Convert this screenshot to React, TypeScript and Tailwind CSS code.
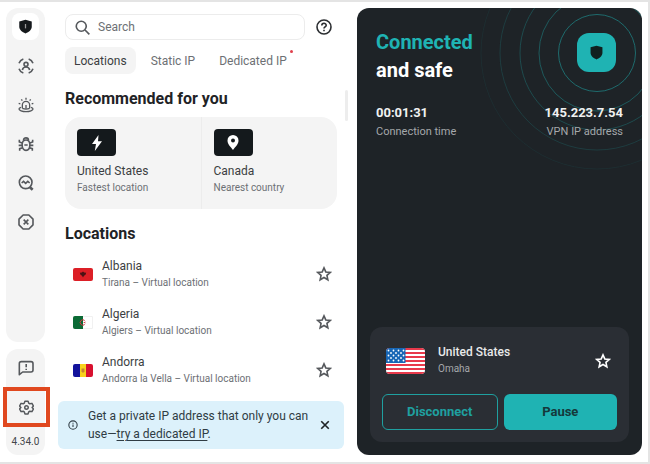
import type { ReactNode, SVGProps } from 'react';

type IconProps = SVGProps<SVGSVGElement>;

function Icon({ children, ...props }: IconProps) {
  return (
    <svg viewBox="0 0 24 24" fill="none" stroke="currentColor" strokeWidth={2.4} aria-hidden="true" {...props}>
      {children}
    </svg>
  );
}

const ShieldIcon = (props: IconProps) => (
  <Icon stroke="none" {...props}>
    <path d="M12 1 21.5 3.500v9c0 4.800-4 8.600-9.500 10.500-5.500-1.900-9.500-5.700-9.500-10.500v-9L12 1Z" fill="currentColor" />
  </Icon>
);

const StarIcon = (props: IconProps) => (
  <Icon {...props}>
    <path d="m12 2.800 2.700 6.100 6.700.7-5 4.500 1.400 6.600-5.800-3.400-5.800 3.400 1.400-6.600-5-4.500 6.700-.7L12 2.800Z" />
  </Icon>
);

const ScanIcon = (props: IconProps) => (
  <Icon {...props}>
    <path d="M8 1.500C4.800 2.600 2.600 4.800 1.500 8M16 1.500c3.200 1.100 5.400 3.300 6.500 6.500M8 22.500c-3.200-1.100-5.400-3.300-6.500-6.500M16 22.500c3.200-1.100 5.400-3.300 6.500-6.500" />
    <circle cx="12" cy="9.500" r="3" />
    <path d="M6.500 18c.6-3 2.700-4.500 5.500-4.500s4.900 1.500 5.500 4.500" />
  </Icon>
);

const AlarmIcon = (props: IconProps) => (
  <Icon strokeWidth={2} {...props}>
    <path d="M6.500 17v-5a5.500 5.500 0 0 1 11 0v5M12 1v3M5 3.500l1.500 2M19 3.500l-1.500 2M1 9.500l2.500.8M23 9.500l-2.500.8M12 12v5" />
    <path d="M4.500 15.500C2.500 16.300 1.500 17 1.500 18c0 2 4.700 4 10.500 4s10.500-2 10.500-4c0-1-1-1.700-3-2.500M6.500 17c3.400 1.300 7.600 1.300 11 0" />
  </Icon>
);

const BugIcon = (props: IconProps) => (
  <Icon {...props}>
    <path d="M12 6c4 0 5.800 2.600 5.800 7.200 0 5-2.300 8.300-5.800 8.300s-5.800-3.300-5.800-8.300C6.200 8.600 8 6 12 6Z" />
    <path d="M8.300 6.500c0-5 7.400-5 7.400 0M6.500 10.500 2 9V5.500M17.500 10.500 22 9V5.500M6 14H1M18 14h5M7 17.500 2.500 19v3M17 17.500l4.500 1.500v3M9.500 13.500h5" />
  </Icon>
);

const MonitorSearchIcon = (props: IconProps) => (
  <Icon {...props}>
    <circle cx="11.500" cy="11" r="9.500" />
    <path d="m5.500 12 2.800-2.500 3.200 3 3.200-3 2.800 2.500" />
    <path d="m17.500 18 4.500 4" strokeWidth="4" />
  </Icon>
);

const BlockIcon = (props: IconProps) => (
  <Icon {...props}>
    <path d="M7.700 1.500h8.600l6.200 6.200v8.600l-6.200 6.200H7.700l-6.200-6.200V7.700l6.200-6.200Z" strokeLinejoin="round" />
    <path d="m8.500 8.500 7 7M15.500 8.500l-7 7" />
  </Icon>
);

const FeedbackIcon = (props: IconProps) => (
  <Icon {...props}>
    <path d="M2 22V5.500C2 3.500 3 2.500 5 2.500h14.500c2 0 3 1 3 3v9.500c0 2-1 3-3 3H7L2 22Z" strokeLinejoin="round" />
    <path d="M12.300 6v5M12.300 13v2" />
  </Icon>
);

const GearIcon = (props: IconProps) => (
  <Icon strokeLinejoin="round" {...props}>
    <path d="M9.500 1.800h5l1.100 3.300 1.700 1 3.400-.7 2.500 4.300L21 12l2.200 2.300-2.500 4.300-3.400-.7-1.700 1-1.100 3.300h-5l-1.100-3.300-1.700-1-3.400.7-2.500-4.300L3 12 .8 9.700l2.500-4.300 3.400.7 1.700-1 1.100-3.300Z" />
    <circle cx="12" cy="12" r="2.800" />
  </Icon>
);

const tools = [
  { label: 'Alternative ID', icon: ScanIcon },
  { label: 'Alert', icon: AlarmIcon },
  { label: 'Antivirus', icon: BugIcon },
  { label: 'Private search', icon: MonitorSearchIcon },
  { label: 'Ad blocker', icon: BlockIcon },
];

function Sidebar() {
  return (
    <nav aria-label="Main" className="flex flex-col gap-[7px] text-[#55585c]">
      <div className="flex flex-1 flex-col items-center rounded-xl bg-[#f4f4f4] pt-[5px]">
        <button aria-label="VPN" className="mb-[6px] flex size-[27px] items-center justify-center rounded-lg bg-white text-[#15191c]">
          <svg viewBox="0 0 24 24" className="size-[15px]" aria-hidden="true">
            <path d="M12 1 22 4v8.500c0 4.800-4.300 8.600-10 10.500C6.300 21.100 2 17.300 2 12.500V4l10-3Z" fill="currentColor" />
            <path d="M12 8v7" stroke="#999" strokeWidth="2" />
          </svg>
        </button>
        {tools.map(({ label, icon: ToolIcon }) => (
          <button key={label} aria-label={label} className="flex h-[39px] w-full items-center justify-center">
            <ToolIcon className="size-4" />
          </button>
        ))}
      </div>
      <div className="flex flex-col items-center rounded-xl bg-[#f4f4f4]">
        <button aria-label="Feedback" className="flex h-[38px] w-full items-center justify-center">
          <FeedbackIcon className="size-4" />
        </button>
        <button
          aria-label="Settings"
          className="-mr-[5px] -ml-[3px] flex h-10 w-[47px] items-center justify-center border-4 border-[#e0481f]"
        >
          <GearIcon className="size-[15px]" />
        </button>
        <span className="flex h-7 items-center text-[10px] text-[#44474a]">4.34.0</span>
      </div>
    </nav>
  );
}

const AlbaniaFlag = () => (
  <svg viewBox="0 0 20 13" className="h-[13px] w-5 rounded-xs" aria-hidden="true">
    <path d="M0 0h20v13H0z" fill="#dc1f26" />
    <path d="m6.800 4.800 2-.3 1.200-1 1.200 1 2 .3-.7 2-1.500 1-1 1.700-1-1.700-1.500-1-.7-2Z" fill="#4a1214" />
  </svg>
);

const AlgeriaFlag = () => (
  <svg viewBox="0 0 20 13" className="h-[13px] w-5 rounded-xs" aria-hidden="true">
    <path d="M0 0h20v13H0z" fill="#e2e2e2" />
    <path d="M10 .5h9.500v12H10z" fill="#fff" />
    <path d="M0 0h10v13H0z" fill="#0b6a35" />
    <path d="M11.700 4.500a2.700 2.700 0 1 0 0 4" fill="none" stroke="#d2343f" />
    <path d="m10 6.500 3-1-1 1 1 1-3-1Z" fill="#d2343f" />
  </svg>
);

const AndorraFlag = () => (
  <svg viewBox="0 0 20 13" className="h-[13px] w-5 rounded-xs" aria-hidden="true">
    <path d="M0 0h7v13H0z" fill="#13139c" />
    <path d="M7 0h6v13H7z" fill="#f8d21c" />
    <path d="M13 0h7v13h-7z" fill="#d8102f" />
    <path d="M8.500 4.500h3v3L10 9 8.500 7.500z" fill="#c7862c" />
  </svg>
);

function UsaFlag() {
  return (
    <svg viewBox="0 0 39 26" className="h-[26px] w-[39px] rounded-sm" aria-hidden="true">
      <path d="M0 0h39v26H0z" fill="#fff" />
      <path d="M0 1h39M0 5h39M0 9h39M0 13h39M0 17h39M0 21h39M0 25h39" stroke="#e8394b" strokeWidth="2" />
      <path d="M0 0h19.500v15H0z" fill="#1766b5" />
      <g stroke="#fff" strokeWidth="1.800" strokeLinecap="round" strokeDasharray="0 5">
        <path d="M2.500 2.500H18M5 5H18M2.500 7.500H18M5 10H18M2.500 12.500H18" />
      </g>
    </svg>
  );
}

const tabs = ['Locations', 'Static IP', 'Dedicated IP'];

const locations = [
  { name: 'Albania', detail: 'Tirana – Virtual location', flag: AlbaniaFlag },
  { name: 'Algeria', detail: 'Algiers – Virtual location', flag: AlgeriaFlag },
  { name: 'Andorra', detail: 'Andorra la Vella – Virtual location', flag: AndorraFlag },
];

function RecommendedCard({ name, detail, children }: { name: string; detail: string; children: ReactNode }) {
  return (
    <button className="flex flex-1 flex-col items-start pt-3 pl-3 text-left">
      <span className="mb-[7px] flex h-[27px] w-[39px] items-center justify-center rounded-sm bg-[#14191c] text-white">
        {children}
      </span>
      <span className="text-[12px] leading-4 text-[#3b3e42]">{name}</span>
      <span className="mt-px text-[10px] leading-4 text-[#6d7074]">{detail}</span>
    </button>
  );
}

function LocationsPane() {
  return (
    <main className="relative flex flex-col pr-[13px] pl-5">
      <div className="mt-[6px] mr-[7px] flex items-center">
        <label className="flex h-[26px] flex-1 items-center gap-2 rounded-lg border border-[#ececec] pl-[9px] text-[#55585c]">
          <Icon className="size-[15px]" strokeWidth={2.6}>
            <circle cx="10" cy="10" r="8" />
            <path d="m16 16 7 7" />
          </Icon>
          <input
            type="text"
            aria-label="Search"
            placeholder="Search"
            className="w-0 flex-1 bg-transparent text-[12px] outline-none placeholder:text-[#6d7074]"
          />
        </label>
        <button aria-label="Help" className="mr-[5px] ml-[11px] text-[#2b2e31]">
          <Icon className="size-4" strokeWidth={2.4}>
            <circle cx="12" cy="12" r="10.500" />
            <path d="M8.700 9.800c0-4.600 6.600-4.300 6.600-.5 0 2.500-3.300 2.500-3.300 5M12 16v2.200" />
          </Icon>
        </button>
      </div>

      <div role="tablist" className="mt-[7px] flex text-[12px] text-[#6d7074]">
        {tabs.map((tab, i) => (
          <button
            key={tab}
            role="tab"
            aria-selected={i === 0}
            className="relative mr-[6px] h-[27px] rounded-lg px-[9px] aria-selected:bg-[#f4f4f4] aria-selected:text-[#3b3e42]"
          >
            {tab}
            {tab === 'Dedicated IP' && <span className="absolute top-[3px] right-[3px] size-[3px] rounded-full bg-[#e0404c]" />}
          </button>
        ))}
      </div>

      <h2 className="mt-[14px] text-[16px] leading-[22px] font-bold text-[#1f2326]">Recommended for you</h2>
      <div className="mt-[7px] mr-[7px] flex h-[92px] divide-x divide-[#ececec] rounded-2xl bg-[#f4f4f4]">
        <RecommendedCard name="United States" detail="Fastest location">
          <svg viewBox="0 0 10 16" className="h-4 w-[10px]" aria-hidden="true">
            <path d="M6.500 0 0 9h4L2.800 16 10 6.300H6L6.500 0Z" fill="currentColor" />
          </svg>
        </RecommendedCard>
        <RecommendedCard name="Canada" detail="Nearest country">
          <svg viewBox="0 0 12 15" className="h-[15px] w-3" aria-hidden="true">
            <path d="M6 0a5.500 5.500 0 0 0-5.500 5.500C.5 9.500 4 12 6 15c2-3 5.500-5.500 5.500-9.500A5.500 5.500 0 0 0 6 0Z" fill="currentColor" />
            <circle cx="6" cy="5.500" r="2" fill="#14191c" />
          </svg>
        </RecommendedCard>
      </div>

      <h2 className="mt-[14px] text-[16px] leading-[22px] font-bold text-[#1f2326]">Locations</h2>
      <ul className="mt-[5px] mr-[7px]">
        {locations.map(({ name, detail, flag: Flag }) => (
          <li key={name} className="flex h-12 items-center pr-[5px] pl-2">
            <Flag />
            <div className="ml-[9px] flex-1">
              <p className="text-[12px] leading-4 text-[#3b3e42]">{name}</p>
              <p className="mt-px text-[10px] leading-4 text-[#6d7074]">{detail}</p>
            </div>
            <button aria-label={`Add ${name} to favorites`} className="text-[#55585c]">
              <StarIcon className="size-4" />
            </button>
          </li>
        ))}
      </ul>

      <div className="mt-auto mb-[6px] -ml-[7px] flex h-12 items-center rounded-md bg-[#dcf1fb] pr-[14px] pl-[10px] text-[#2f3c44]">
        <Icon className="size-[10px]" strokeWidth={2.6}>
          <circle cx="12" cy="12" r="10" />
          <path d="M12 11v6M12 6.500v2.500" />
        </Icon>
        <p className="ml-[10px] flex-1 text-[12px] leading-[18px]">
          Get a private IP address that only you can use—
          <a href="#dedicated-ip" className="underline underline-offset-2">
            try a dedicated IP
          </a>
          .
        </p>
        <button aria-label="Dismiss" className="text-[#1f2326]">
          <Icon className="size-[10px]" strokeWidth={4}>
            <path d="m3 3 18 18M21 3 3 21" />
          </Icon>
        </button>
      </div>

      <div className="absolute top-[82px] right-[9px] h-[31px] w-[3px] rounded-full bg-[#ededed]" />
    </main>
  );
}

function SignalRings() {
  return (
    <svg viewBox="0 0 285 200" className="absolute top-0 right-0 h-[200px] w-[285px]" fill="none" stroke="#1fb3b3" aria-hidden="true">
      <circle cx="240" cy="45" r="38.500" strokeOpacity="0.5" />
      <circle cx="240" cy="45" r="58" strokeOpacity="0.38" />
      <circle cx="240" cy="45" r="77" strokeOpacity="0.28" />
      <circle cx="240" cy="45" r="97" strokeOpacity="0.18" />
      <circle cx="240" cy="45" r="116" strokeOpacity="0.07" />
    </svg>
  );
}

function StatusPanel() {
  return (
    <section className="relative flex flex-col overflow-hidden rounded-xl bg-[#1e2327] px-[13px] pb-[13px] text-white">
      <SignalRings />
      <div className="relative flex items-start justify-between pt-5 pr-[13px] pl-[6px]">
        <h1 className="text-[20px] leading-7 font-bold">
          <span className="block text-[#1fb3b3]">Connected</span>
          and safe
        </h1>
        <div className="mt-[5px] flex size-[39px] items-center justify-center rounded-xl bg-[#1fb3b3] text-[#10201f]">
          <ShieldIcon className="size-[15px]" />
        </div>
      </div>
      <div className="relative mt-[18px] flex justify-between px-[6px]">
        <div>
          <p className="text-[13px] leading-[22px] font-bold text-[#f0f1f1]">00:01:31</p>
          <p className="text-[11px] leading-4 text-[#a5a8ab]">Connection time</p>
        </div>
        <div className="text-right">
          <p className="text-[13px] leading-[22px] font-bold text-[#f0f1f1]">145.223.7.54</p>
          <p className="text-[11px] leading-4 text-[#a5a8ab]">VPN IP address</p>
        </div>
      </div>

      <div className="relative mt-auto rounded-xl bg-[#2a2e34] px-3 pb-3">
        <div className="flex h-[67px] items-center pr-[6px] pl-1">
          <UsaFlag />
          <div className="ml-[13px] flex-1">
            <p className="text-[12px] leading-4 font-medium text-[#e8e9ea]">United States</p>
            <p className="mt-px text-[10px] leading-4 text-[#a5a8ab]">Omaha</p>
          </div>
          <button aria-label="Add United States to favorites">
            <StarIcon className="size-4" />
          </button>
        </div>
        <div className="flex gap-[6px] text-[13px] font-bold">
          <button className="h-9 flex-1 rounded-md border border-[#1fa0a0] text-[#1fa0a0]">Disconnect</button>
          <button className="h-9 flex-1 rounded-md bg-[#1fb3b3] text-[#15393b]">Pause</button>
        </div>
      </div>
    </section>
  );
}

export default function App() {
  return (
    <div className="grid min-h-screen grid-cols-[39px_312fr_285fr] border-t-2 border-r-2 border-b-2 border-[#e4e4e4] bg-white px-[6px] pt-[6px] pb-[7px] font-['Roboto',sans-serif]">
      <Sidebar />
      <LocationsPane />
      <StatusPanel />
    </div>
  );
}
